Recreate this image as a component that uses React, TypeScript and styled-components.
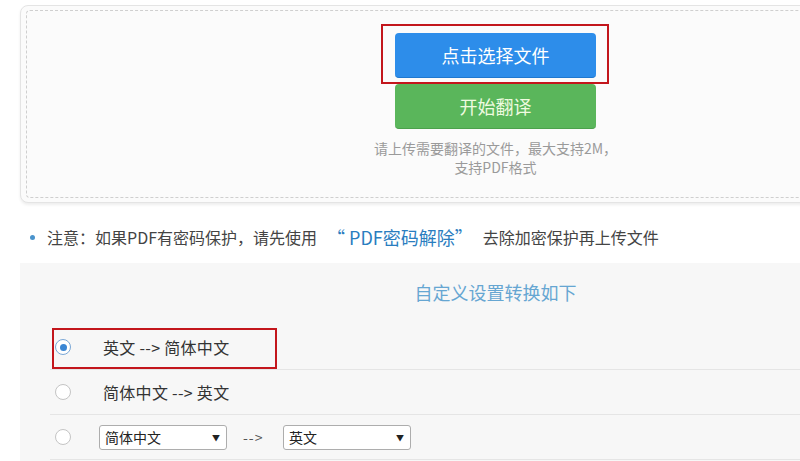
import React from 'react';
import styled, { createGlobalStyle } from 'styled-components';

const GlobalStyle = createGlobalStyle`
  html, body {
    margin: 0;
    padding: 0;
    background: #fff;
  }
  body {
    font-family: "Noto Sans CJK SC", "Noto Sans", "Liberation Sans", sans-serif;
    color: #333;
  }
`;

const Viewport = styled.div`
  width: 100vw;
  height: 100vh;
  overflow: hidden;
`;

const Page = styled.div`
  width: 951px;
  padding: 5px 0 0 20px;
`;

const UploadBox = styled.div`
  height: 198px;
  box-sizing: border-box;
  padding: 4px 5px;
  background: #fbfbfb;
  border: 1px solid #e4e4e4;
  border-radius: 8px;
  box-shadow: 0 2px 3px rgba(0, 0, 0, 0.07);
`;

const DashedArea = styled.div`
  height: 100%;
  box-sizing: border-box;
  border: 1px dashed #cfcfcf;
  border-radius: 4px;
  display: flex;
  flex-direction: column;
  align-items: center;
  padding-top: 22px;
`;

const Highlight = styled.div<{ $inset: string }>`
  position: relative;
  &::after {
    content: '';
    position: absolute;
    inset: ${p => p.$inset};
    border: 2px solid #c3161c;
    pointer-events: none;
  }
`;

const ActionButton = styled.button<{ $tone: 'blue' | 'green' }>`
  display: block;
  width: 201px;
  height: 45px;
  border: none;
  border-radius: 4px;
  font-family: inherit;
  font-size: 18px;
  cursor: pointer;
  background: ${p => (p.$tone === 'blue' ? '#2d8dea' : '#5ab65b')};
  color: ${p => (p.$tone === 'blue' ? '#ffffff' : '#effbe0')};
  border-bottom: 1px solid ${p => (p.$tone === 'blue' ? '#1f78cf' : '#4ba14c')};
`;

const ButtonStack = styled.div`
  display: flex;
  flex-direction: column;
  gap: 6px;
`;

const Hint = styled.p`
  margin: 10px 0 0;
  font-size: 14px;
  line-height: 19px;
  color: #9a9a9a;
  text-align: center;
`;

const Note = styled.div`
  margin-top: 22px;
  display: flex;
  align-items: center;
  font-size: 16px;
  line-height: 24px;
  color: #444;
`;

const Bullet = styled.span`
  width: 5px;
  height: 5px;
  border-radius: 50%;
  background: #4a93cc;
  margin: 0 12px 0 10px;
`;

const NoteLink = styled.a`
  color: #2a7dbf;
  font-size: 18px;
  text-decoration: none;
  margin: 0 10px 0 10px;
`;

const Panel = styled.section`
  margin-top: 14px;
  background: #f7f7f7;
  padding: 16px 0 0 30px;
  height: 230px;
`;

const PanelTitle = styled.h3`
  margin: 0 0 20px;
  padding-right: 30px;
  font-size: 18px;
  font-weight: normal;
  line-height: 26px;
  color: #66a6d2;
  text-align: center;
`;

const OptionRow = styled.div<{ $marked?: boolean }>`
  position: relative;
  height: 44px;
  display: flex;
  align-items: center;
  border-bottom: 1px solid #e5e5e5;
  font-size: 16px;
  color: #333;
  ${p =>
    p.$marked &&
    `
    &::after {
      content: '';
      position: absolute;
      left: 2px;
      top: 3px;
      width: 221px;
      height: 37px;
      border: 2px solid #c3161c;
    }
  `}
`;

const Radio = styled.span<{ $checked?: boolean }>`
  flex: none;
  width: 16px;
  height: 16px;
  margin-left: 5px;
  box-sizing: border-box;
  border-radius: 50%;
  border: 1px solid ${p => (p.$checked ? '#7aa7d6' : '#c4c4c4')};
  background: #fff;
  display: flex;
  align-items: center;
  justify-content: center;
  &::before {
    content: '';
    display: ${p => (p.$checked ? 'block' : 'none')};
    width: 7px;
    height: 7px;
    border-radius: 50%;
    background: #3a86d4;
  }
`;

const OptionLabel = styled.span`
  margin-left: 32px;
  letter-spacing: 0.3px;
`;

const SelectGroup = styled.div`
  margin-left: 28px;
  display: flex;
  align-items: center;
`;

const SelectBox = styled.div`
  width: 128px;
  height: 25px;
  box-sizing: border-box;
  border: 1px solid #adadad;
  border-radius: 3px;
  background: #fff;
  display: flex;
  align-items: center;
  justify-content: space-between;
  padding: 0 6px 0 5px;
  font-size: 14px;
  color: #222;
`;

const Caret = styled.span`
  font-size: 8px;
  color: #222;
`;

const Arrow = styled.span`
  width: 24px;
  margin: 0 16px;
  font-size: 14px;
  letter-spacing: 1px;
  color: #555;
`;

const App: React.FC = () => {
  return (
    <Viewport>
      <GlobalStyle />
      <Page>
        <UploadBox>
          <DashedArea>
            <ButtonStack>
              <Highlight $inset="-9px -13px -6px -14px">
                <ActionButton $tone="blue">点击选择文件</ActionButton>
              </Highlight>
              <ActionButton $tone="green">开始翻译</ActionButton>
            </ButtonStack>
            <Hint>
              请上传需要翻译的文件，最大支持2M，
              <br />
              支持PDF格式
            </Hint>
          </DashedArea>
        </UploadBox>

        <Note>
          <Bullet />
          注意：如果PDF有密码保护，请先使用
          <NoteLink href="#">“ PDF密码解除”</NoteLink>
          去除加密保护再上传文件
        </Note>

        <Panel>
          <PanelTitle>自定义设置转换如下</PanelTitle>
          <OptionRow $marked>
            <Radio $checked />
            <OptionLabel>英文 --&gt; 简体中文</OptionLabel>
          </OptionRow>
          <OptionRow>
            <Radio />
            <OptionLabel>简体中文 --&gt; 英文</OptionLabel>
          </OptionRow>
          <OptionRow>
            <Radio />
            <SelectGroup>
              <SelectBox>
                简体中文
                <Caret>▼</Caret>
              </SelectBox>
              <Arrow>--&gt;</Arrow>
              <SelectBox>
                英文
                <Caret>▼</Caret>
              </SelectBox>
            </SelectGroup>
          </OptionRow>
        </Panel>
      </Page>
    </Viewport>
  );
};

export default App;
